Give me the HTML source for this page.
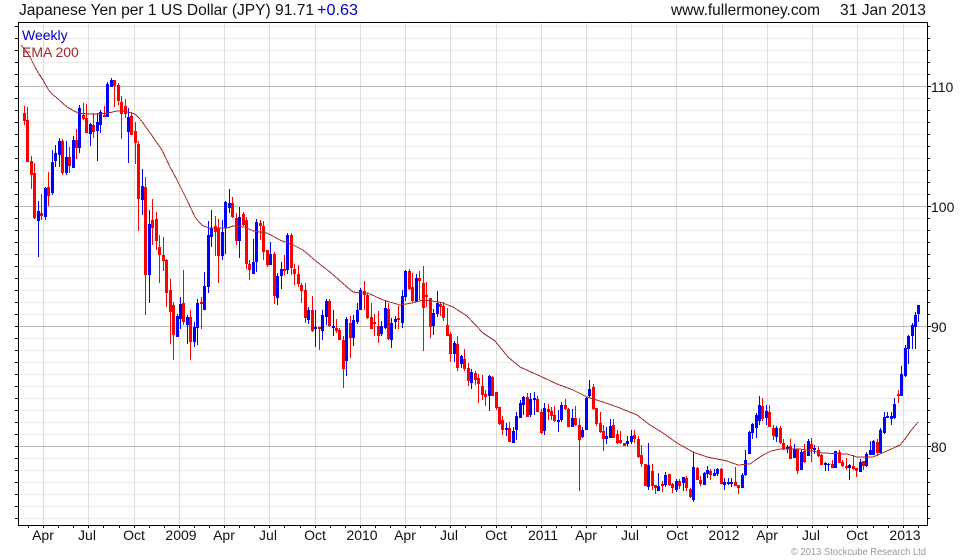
<!DOCTYPE html>
<html lang="en"><head><meta charset="utf-8"><title>Japanese Yen per 1 US Dollar</title>
<style>
html,body{margin:0;padding:0;background:#fff;width:980px;height:560px;overflow:hidden}
svg{display:block}
text{font-family:"Liberation Sans",Arial,sans-serif;fill:#111}
</style></head><body>
<svg width="980" height="560" viewBox="0 0 980 560" xmlns="http://www.w3.org/2000/svg">
<g shape-rendering="crispEdges" transform="translate(0,.5)" fill="none">
<path stroke="#ececec" d="M19 26H927M19 38H927M19 50H927M19 62H927M19 74H927M19 98H927M19 110H927M19 122H927M19 134H927M19 146H927M19 158H927M19 170H927M19 182H927M19 194H927M19 218H927M19 230H927M19 242H927M19 254H927M19 266H927M19 278H927M19 290H927M19 302H927M19 314H927M19 338H927M19 350H927M19 362H927M19 374H927M19 386H927M19 398H927M19 410H927M19 422H927M19 434H927M19 458H927M19 470H927M19 482H927M19 494H927M19 506H927M19 518H927"/>
</g>
<g shape-rendering="crispEdges" transform="translate(.5,0)" fill="none">
<path stroke="#dedede" d="M43 23V525M88 23V525M134 23V525M179 23V525M224 23V525M269 23V525M315 23V525M360 23V525M405 23V525M450 23V525M496 23V525M541 23V525M586 23V525M631 23V525M676 23V525M722 23V525M767 23V525M812 23V525M857 23V525M903 23V525"/>
</g>
<g shape-rendering="crispEdges" transform="translate(0,.5)" fill="none">
<path stroke="#bbb" d="M19 86H927M19 206H927M19 326H927M19 446H927"/>
</g>

<g shape-rendering="crispEdges" transform="translate(.5,0)" fill="none">
<!-- red wicks -->
<path stroke="#f00" d="M24 106V125M27 107V162M31 156V189M34 163V219M41 194V220M48 172V206M62 139V175M69 147V173M76 129V159M83 103V120M86 104V133M93 113V138M104 106V117M114 80V107M118 83V105M121 96V139M125 99V118M131 112V135M135 122V164M138 141V231M145 177V315M152 199V245M156 212V250M159 235V283M163 237V271M166 259V307M170 279V344M173 302V360M183 270V325M190 310V360M201 297V329M215 216V256M218 219V283M232 197V218M236 213V245M243 212V226M246 217V269M249 260V280M260 220V240M263 221V260M267 250V267M274 252V304M284 255V275M291 233V275M294 264V285M298 265V287M301 283V303M305 283V323M312 296V332M319 327V350M329 299V327M336 319V333M339 328V340M343 336V388M350 316V358M364 281V310M367 293V319M371 303V329M374 314V336M378 311V343M388 303V340M398 306V329M409 269V290M412 273V302M419 271V300M423 266V351M426 282V307M430 298V338M440 302V316M443 302V321M447 308V336M450 332V362M457 336V371M464 349V371M468 363V386M475 371V385M478 374V403M482 375V400M485 390V406M492 376V396M496 392V410M499 407V425M502 416V435M509 422V442M527 393V417M537 396V412M541 409V434M548 404V420M551 407V420M554 406V422M565 399V410M568 408V427M575 406V426M579 418V491M593 384V410M596 408V426M600 412V433M603 425V451M613 419V438M617 430V444M620 431V444M624 443V446M634 430V443M638 436V458M641 445V467M645 464V486M652 464V490M655 485V494M662 481V492M669 474V486M672 483V493M679 479V489M686 476V491M690 488V498M697 467V480M700 476V486M710 469V480M721 468V484M735 467V486M738 485V494M762 398V421M769 405V427M773 425V440M780 426V444M783 439V450M790 439V459M797 449V474M804 444V463M811 438V462M818 447V457M821 454V465M832 460V468M839 450V463M842 460V467M846 458V470M853 455V470M856 468V477M863 461V470M877 439V456M898 390V403"/>
<!-- red bodies -->
<path stroke="#f00" stroke-width="3" d="M24 113V121M27 120V162M31 161V175M34 173V218M41 213V216M48 187V196M62 141V173M69 157V166M76 140V148M83 115V119M86 118V133M93 125V132M104 115V117M114 80V86M118 85V101M121 102V114M125 106V114M131 116V135M135 131V143M138 144V199M145 187V275M152 220V228M156 219V241M159 247V255M163 255V261M166 260V293M170 290V312M173 305V335M183 303V322M190 317V342M201 302V304M215 226V232M218 228V256M232 203V217M236 218V241M243 214V225M246 220V264M249 264V270M260 223V226M263 226V252M267 250V265M274 254V296M284 269V271M291 235V268M294 269V274M298 274V284M301 285V291M305 290V318M312 310V331M319 327V329M329 301V326M336 328V331M339 330V340M343 340V369M350 323V338M364 291V295M367 295V318M371 317V329M374 322V324M378 326V336M388 309V339M398 318V320M409 271V289M412 287V301M419 278V281M423 283V308M426 295V297M430 298V327M440 304V307M443 306V318M447 325V336M450 334V354M457 344V368M464 359V369M468 368V381M475 373V380M478 378V384M482 386V395M485 394V397M492 377V396M496 392V408M499 407V424M502 420V430M509 428V442M527 397V417M537 399V412M541 412V433M548 409V412M551 411V416M554 415V421M565 405V409M568 409V427M575 418V425M579 425V440M593 387V409M596 408V424M600 423V432M603 431V439M613 425V438M617 434V443M620 440V443M624 443V446M634 435V439M638 439V457M641 455V464M645 464V486M652 471V486M655 485V488M662 484V486M669 474V485M672 484V488M679 481V486M686 478V488M690 489V497M697 468V480M700 480V484M710 471V475M721 469V484M735 482V486M738 485V488M762 406V419M769 412V427M773 428V436M780 428V443M783 443V449M790 446V459M797 449V471M804 451V462M811 444V449M818 450V456M821 455V465M832 464V468M839 452V463M842 462V466M846 466V468M853 466V469M856 468V471M863 461V466M877 442V453M898 394V396"/>
<!-- blue wicks -->
<path stroke="#00f" d="M38 201V257M45 187V220M52 150V195M55 145V167M59 138V167M66 141V175M73 136V168M79 105V153M90 123V146M97 113V161M100 110V133M107 82V117M111 78V87M128 108V163M142 169V215M149 210V303M177 314V337M180 297V329M187 315V344M194 322V347M197 299V345M204 272V310M208 221V293M211 210V247M222 220V260M225 201V254M229 189V213M239 207V258M253 239V274M256 219V272M270 242V265M277 273V305M281 262V289M287 233V274M308 307V324M315 310V347M322 310V340M326 299V325M333 310V336M346 317V376M353 315V346M357 303V324M360 288V310M381 321V336M385 300V329M391 318V348M395 316V329M402 290V328M405 270V301M416 274V302M433 309V335M437 291V317M454 341V362M461 355V368M471 369V389M489 375V411M506 423V436M513 427V443M516 412V440M520 400V418M523 396V415M530 393V417M534 392V415M544 403V435M558 410V432M561 402V422M572 409V427M582 427V438M586 397V430M589 380V398M606 427V444M610 419V438M627 436V446M631 430V444M648 443V490M658 473V491M665 472V487M676 479V492M683 477V491M693 452V502M704 472V485M707 466V478M714 469V476M717 468V476M724 478V490M728 478V485M731 478V487M742 473V488M745 450V476M749 431V454M752 423V439M756 413V438M759 396V425M766 405V425M776 426V442M787 445V453M794 444V458M801 450V470M808 439V456M814 445V454M825 462V471M828 463V471M835 451V468M849 464V480M860 459V472M866 452V467M870 441V455M873 440V455M880 428V453M884 412V434M887 412V418M891 412V425M894 398V419M901 366V396M905 345V377M908 335V364M912 323V349M915 312V349M918 305V322"/>
<!-- blue bodies -->
<path stroke="#00f" stroke-width="3" d="M38 211V221M45 188V217M52 162V193M55 153V161M59 141V155M66 157V173M73 140V168M79 108V148M90 124V134M97 122V131M100 112V125M107 84V117M111 80V87M128 117V132M142 186V200M149 224V275M177 316V337M180 304V319M187 317V325M194 327V342M197 303V328M204 286V310M208 235V287M211 228V237M222 232V256M225 202V228M229 203V208M239 217V241M253 262V274M256 222V262M270 254V265M277 276V298M281 269V276M287 235V270M308 310V320M315 327V329M322 315V331M326 301V317M333 326V328M346 319V361M353 320V338M357 310V322M360 290V310M381 326V334M385 308V328M391 323V340M395 319V322M402 296V323M405 271V297M416 278V302M433 313V326M437 303V314M454 343V354M461 356V364M471 372V383M489 376V396M506 428V430M513 431V443M516 416V430M520 403V418M523 397V405M530 399V415M534 398V400M544 408V431M558 420V422M561 405V420M572 418V427M582 430V437M586 398V430M589 389V396M606 436V439M610 426V438M627 441V444M631 436V442M648 465V487M658 486V491M665 475V485M676 481V490M683 477V483M693 467V500M704 473V485M707 470V474M714 473V476M717 469V474M724 482V485M728 482V484M731 482V484M742 475V488M745 460V475M749 432V454M752 424V433M756 415V428M759 405V421M766 411V418M776 428V437M787 447V449M794 449V458M801 452V470M808 441V456M814 448V450M825 463V465M828 464V465M835 451V468M849 465V468M860 462V472M866 454V466M870 450V455M873 441V455M880 430V453M884 417V433M887 416V418M891 416V419M894 404V418M901 374V396M905 348V376M908 336V349M912 325V336M915 315V327M918 305V314"/>
</g>

<polyline shape-rendering="crispEdges" fill="none" stroke="#a52a2a" stroke-width="1" points="21,45 26,51 30,57 35,67 39,74 43,80 48,89 52,94 57,98 67,107 78,113 88,114 100,114 108,113 117,111 128,112 135,114 139,118 143,123 153,137 162,150 170,167 177,180 187,200 195,217 199,222 203,226 210,228 227,228 233,226 245,227 253,231 267,233 280,240 293,245 303,250 317,262 330,272 347,287 353,292 360,293 368,293 383,300 400,305 412,303 423,300 440,302 453,307 467,316 483,333 495,341 508,357 514,362 520,367 540,376 557,384 573,390 587,397 603,402 620,408 637,415 650,425 663,433 677,443 693,452 707,457 727,461 738,465 750,464 757,459 763,455 771,451 780,449 800,449 823,453 847,454 857,457 873,457 887,451 900,445 905,439 910,432 918,422"/>

<g shape-rendering="crispEdges" fill="none" stroke="#000">
<path transform="translate(0,.5)" d="M18 22H928M18 525H928"/>
<path transform="translate(.5,0)" d="M18 22V526M927 22V526"/>
<path transform="translate(0,.5)" d="M15 26H18M15 38H18M15 50H18M15 62H18M15 74H18M15 86H18M15 98H18M15 110H18M15 122H18M15 134H18M15 146H18M15 158H18M15 170H18M15 182H18M15 194H18M15 206H18M15 218H18M15 230H18M15 242H18M15 254H18M15 266H18M15 278H18M15 290H18M15 302H18M15 314H18M15 326H18M15 338H18M15 350H18M15 362H18M15 374H18M15 386H18M15 398H18M15 410H18M15 422H18M15 434H18M15 446H18M15 458H18M15 470H18M15 482H18M15 494H18M15 506H18M15 518H18"/>
<path transform="translate(0,.5)" d="M927 26H930M927 38H930M927 50H930M927 62H930M927 74H930M927 86H931M927 98H930M927 110H930M927 122H930M927 134H930M927 146H930M927 158H930M927 170H930M927 182H930M927 194H930M927 206H931M927 218H930M927 230H930M927 242H930M927 254H930M927 266H930M927 278H930M927 290H930M927 302H930M927 314H930M927 326H931M927 338H930M927 350H930M927 362H930M927 374H930M927 386H930M927 398H930M927 410H930M927 422H930M927 434H930M927 446H931M927 458H930M927 470H930M927 482H930M927 494H930M927 506H930M927 518H930"/>
<path transform="translate(.5,0)" d="M28 526V528M43 526V528M58 526V528M73 526V528M88 526V528M103 526V528M119 526V528M134 526V528M149 526V528M164 526V528M179 526V528M194 526V528M209 526V528M224 526V528M239 526V528M254 526V528M269 526V528M284 526V528M300 526V528M315 526V528M330 526V528M345 526V528M360 526V528M375 526V528M390 526V528M405 526V528M420 526V528M435 526V528M450 526V528M465 526V528M481 526V528M496 526V528M511 526V528M526 526V528M541 526V528M556 526V528M571 526V528M586 526V528M601 526V528M616 526V528M631 526V528M646 526V528M662 526V528M677 526V528M692 526V528M707 526V528M722 526V528M737 526V528M752 526V528M767 526V528M782 526V528M797 526V528M812 526V528M827 526V528M842 526V528M857 526V528M873 526V528M888 526V528M903 526V528M918 526V528"/>
</g>

<text x="19" y="15" font-size="16" textLength="295" lengthAdjust="spacingAndGlyphs">Japanese Yen per 1 US Dollar (JPY) 91.71</text>
<text x="317" y="15" font-size="16" textLength="41" lengthAdjust="spacingAndGlyphs" style="fill:#0000c8">+0.63</text>
<text x="671" y="15" font-size="16" textLength="149" lengthAdjust="spacingAndGlyphs">www.fullermoney.com</text>
<text x="840" y="15" font-size="16" textLength="86" lengthAdjust="spacingAndGlyphs">31 Jan 2013</text>

<text x="22" y="40" font-size="14" style="fill:#0000c8">Weekly</text>
<text x="22" y="57" font-size="14" style="fill:#a52a2a">EMA 200</text>

<g font-size="14">
<text x="931" y="92">110</text>
<text x="931" y="212">100</text>
<text x="931" y="332">90</text>
<text x="931" y="452">80</text>
</g>
<g font-size="14" text-anchor="middle">
<text x="43" y="540">Apr</text><text x="87" y="540">Jul</text><text x="134" y="540">Oct</text><text x="181" y="540">2009</text>
<text x="224" y="540">Apr</text><text x="268" y="540">Jul</text><text x="315" y="540">Oct</text><text x="362" y="540">2010</text>
<text x="405" y="540">Apr</text><text x="449" y="540">Jul</text><text x="496" y="540">Oct</text><text x="543" y="540">2011</text>
<text x="586" y="540">Apr</text><text x="630" y="540">Jul</text><text x="677" y="540">Oct</text><text x="724" y="540">2012</text>
<text x="767" y="540">Apr</text><text x="811" y="540">Jul</text><text x="857" y="540">Oct</text><text x="905" y="540">2013</text>
</g>
<text x="791" y="555" font-size="10" textLength="135" lengthAdjust="spacingAndGlyphs" style="fill:#999">© 2013 Stockcube Research Ltd</text>
</svg>
</body></html>
